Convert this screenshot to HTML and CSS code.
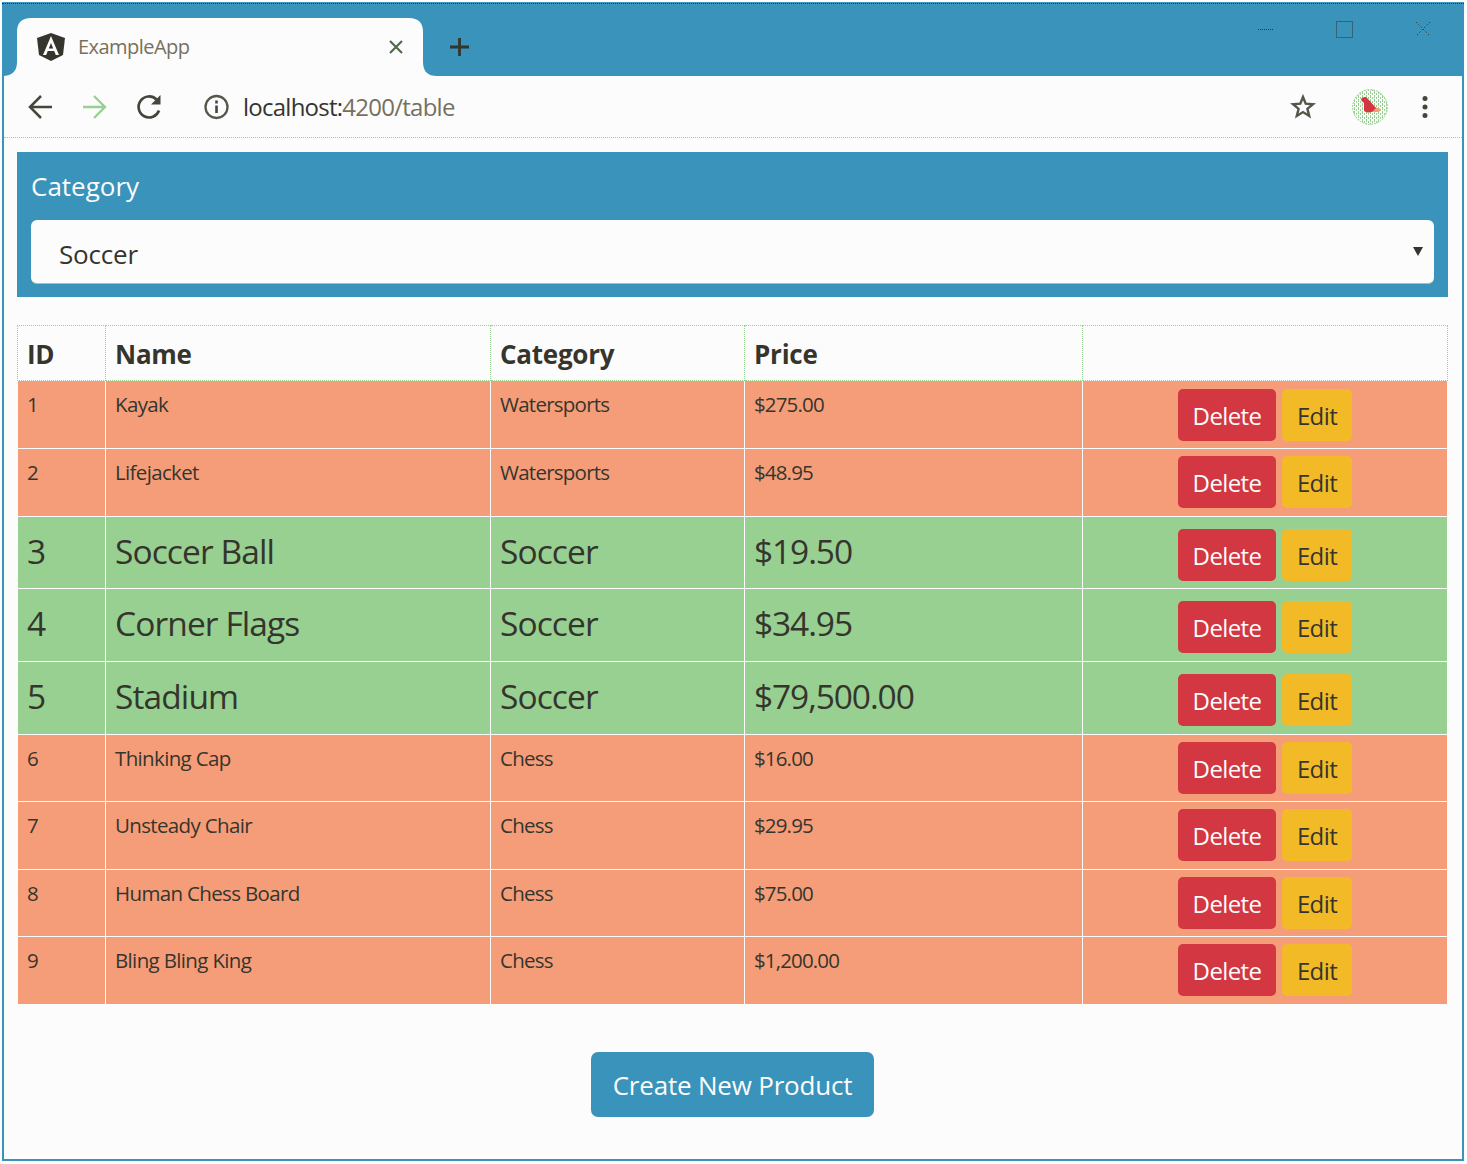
FILE: index.html
```html
<!DOCTYPE html>
<html lang="en">
<head>
<meta charset="utf-8">
<title>ExampleApp</title>
<link rel="stylesheet" href="styles.css">
</head>
<body>
<div class="window">
  <header class="tabbar">
    <svg class="tab-shape" width="434" height="58" viewBox="0 0 434 58"><path d="M0 58Q13 57 13 44V14Q13 0 27 0H405Q419 0 419 14V44Q419 58 433 58Z" fill="#fcfcfc"/></svg>
    <div class="tab">
      <svg class="logo" width="28" height="28" viewBox="0 0 28 28"><path d="M14 0L28 5L26 22L14 28L2 22L0 5Z" fill="#35352d"/><path fill-rule="evenodd" d="M14 3L22 22H18.8L17.2 18H10.8L9.2 22H6ZM14 10L11.8 15.4H16.2Z" fill="#fcfcfc"/></svg>
      <span class="tab-title">ExampleApp</span>
      <svg class="tab-close" width="16" height="16" viewBox="0 0 16 16"><path d="M2 2L14 14M14 2L2 14" stroke="#55684a" stroke-width="2.2"/></svg>
    </div>
    <svg class="tab-new" width="22" height="20" viewBox="0 0 22 20"><path d="M1 10H20M10.500 1V19" stroke="#35352d" stroke-width="2.8"/></svg>
    <div class="controls">
      <svg width="16" height="16" viewBox="0 0 16 16"><path d="M0 8.500H15" stroke="#35352d" stroke-dasharray="1 1"/></svg>
      <svg width="17" height="17" viewBox="0 0 17 17"><path d="M.5 .5H16.500V16.500H.5Z" fill="none" stroke="#35352d" stroke-dasharray="1 1"/></svg>
      <svg width="16" height="16" viewBox="0 0 16 16"><path d="M1 1L15 15M15 1L1 15" stroke="#35352d" stroke-width=".9" stroke-dasharray="1.400 2"/></svg>
    </div>
  </header>
  <nav class="toolbar">
    <svg class="back" width="26" height="26" viewBox="0 0 26 26"><path d="M25 13H3M14 2L3 13L14 24" fill="none" stroke="#45453b" stroke-width="2.500"/></svg>
    <svg class="forward" width="26" height="26" viewBox="0 0 26 26"><path d="M1 13H23M12 2L23 13L12 24" fill="none" stroke="#98d092" stroke-width="2.300"/></svg>
    <svg class="reload" width="26" height="26" viewBox="0 0 26 26"><path d="M23 16.500A10.500 10.500 0 1 1 20.500 5.500" fill="none" stroke="#45453b" stroke-width="2.700"/><path d="M24.500 1V10.500H15Z" fill="#45453b"/></svg>
    <svg class="info" width="26" height="26" viewBox="0 0 26 26"><circle cx="12.500" cy="13" r="11" fill="none" stroke="#56564a" stroke-width="2.300"/><path d="M12.500 11.500V19M12.500 6.500V9.500" stroke="#45453b" stroke-width="2.600"/></svg>
    <span class="url"><b>localhost:</b>4200/table</span>
    <svg class="star" width="26" height="26" viewBox="0 0 26 26"><path d="M13 3L15.700 9.700L23 10.200L17.400 14.900L19.200 22L13 18.100L6.800 22L8.600 14.900L3 10.200L10.300 9.700Z" fill="none" stroke="#56564a" stroke-width="2.400"/></svg>
    <svg class="avatar" width="36" height="36" viewBox="0 0 36 36"><defs><pattern id="weave" width="4" height="4" patternUnits="userSpaceOnUse"><path d="M0 0h1v2h-1zM2 2h1v2h-1z" fill="#98d092"/><path d="M2 0h1v1h-1z" fill="#98d092"/></pattern></defs><circle cx="18" cy="18" r="17.500" fill="url(#weave)"/><circle cx="18" cy="18" r="17.300" fill="none" stroke="#98d092" stroke-dasharray="2 1"/><path d="M19 17L29 20L27 23L19 23Z" fill="#f59d79"/><path d="M9 11Q9 8 14 8L17 11L24 19L21 22Q17 25 12 22L12 14Z" fill="#d23742"/></svg>
    <svg class="menu" width="8" height="26" viewBox="0 0 8 26"><g fill="#45453b"><circle cx="4" cy="4.500" r="2.500"/><circle cx="4" cy="13" r="2.500"/><circle cx="4" cy="21.500" r="2.500"/></g></svg>
  </nav>
  <main>
    <section class="filter">
      <label>Category</label>
      <div class="select"><span>Soccer</span><svg width="10" height="9" viewBox="0 0 10 9"><path d="M0 0H10L5 9Z" fill="#35352d"/></svg></div>
    </section>
    <table>
      <colgroup><col class="c-id"><col class="c-name"><col class="c-cat"><col class="c-price"><col></colgroup>
      <thead><tr><th>ID</th><th>Name</th><th>Category</th><th>Price</th><th></th></tr></thead>
      <tbody>
        <tr class="other tall first"><td>1</td><td>Kayak</td><td>Watersports</td><td>$275.00</td><td class="actions"><button class="delete">Delete</button><button class="edit">Edit</button></td></tr>
        <tr class="other tall"><td>2</td><td>Lifejacket</td><td>Watersports</td><td>$48.95</td><td class="actions"><button class="delete">Delete</button><button class="edit">Edit</button></td></tr>
        <tr class="match first"><td>3</td><td>Soccer Ball</td><td>Soccer</td><td>$19.50</td><td class="actions"><button class="delete">Delete</button><button class="edit">Edit</button></td></tr>
        <tr class="match"><td>4</td><td>Corner Flags</td><td>Soccer</td><td>$34.95</td><td class="actions"><button class="delete">Delete</button><button class="edit">Edit</button></td></tr>
        <tr class="match"><td>5</td><td>Stadium</td><td>Soccer</td><td>$79,500.00</td><td class="actions"><button class="delete">Delete</button><button class="edit">Edit</button></td></tr>
        <tr class="other"><td>6</td><td>Thinking Cap</td><td>Chess</td><td>$16.00</td><td class="actions"><button class="delete">Delete</button><button class="edit">Edit</button></td></tr>
        <tr class="other tall"><td>7</td><td>Unsteady Chair</td><td>Chess</td><td>$29.95</td><td class="actions"><button class="delete">Delete</button><button class="edit">Edit</button></td></tr>
        <tr class="other"><td>8</td><td>Human Chess Board</td><td>Chess</td><td>$75.00</td><td class="actions"><button class="delete">Delete</button><button class="edit">Edit</button></td></tr>
        <tr class="other last"><td>9</td><td>Bling Bling King</td><td>Chess</td><td>$1,200.00</td><td class="actions"><button class="delete">Delete</button><button class="edit">Edit</button></td></tr>
      </tbody>
    </table>
    <button class="create">Create New Product</button>
  </main>
</div>
</body>
</html>
```
FILE: styles.css
```css
* { box-sizing: border-box; }
body { margin: 0; padding: 2px; background: #fcfcfc; color: #35352d; font-family: "Open Sans", "Noto Sans", sans-serif; }
svg { display: block; flex: none; }
button { font-family: inherit; border: 0; padding: 0; }
.window { width: 1462px; height: 1159px; border: 2px solid #3993ba; border-top: 0; background: #fcfcfc; }
.tabbar { height: 74px; margin: 0 -2px; background: #3993ba; display: flex; position: relative; }
.tabbar::before { content: ""; position: absolute; top: 1px; left: 0; right: 0; border-top: 1px dotted #35352d; }
.tab-shape { position: absolute; left: 2px; bottom: 0; }
.tab { position: relative; width: 420px; padding: 31px 18px 0 35px; display: flex; align-items: flex-start; }
.tab-title { font-size: 20px; line-height: 28px; margin: 0 0 0 13px; letter-spacing: -.55px; color: #77705c; }
.tab-close { margin: 6px 0 0 auto; }
.tab-new { margin: 35px 0 0 27px; }
.controls { margin-left: auto; padding: 19px 33px 0 0; display: flex; gap: 62px; }
.toolbar { height: 62px; padding-left: 23px; display: flex; align-items: center; border-bottom: 1px dotted #98d092; }
.forward { margin-left: 29px; }
.reload { margin-left: 28px; }
.info { margin-left: 42px; }
.url { margin-left: 13px; font-size: 24px; line-height: 32px; letter-spacing: -.75px; color: #77705c; }
.url b { font-weight: 400; color: #35352d; }
.star { margin-left: auto; }
.avatar { margin-left: 36px; }
.menu { margin: 0 33px 0 33px; }
main { padding: 14px 14px 0 13px; display: flex; flex-direction: column; }
.filter { height: 145px; background: #3993ba; padding: 15px 14px 0; }
.filter label { display: block; height: 53px; font-size: 26px; line-height: 38px; color: #fcfcfc; }
.select { height: 64px; background: #fcfcfc; border-radius: 6px; border-bottom: 1px solid #98d092; padding: 4px 11px 0 28px; display: flex; justify-content: space-between; align-items: center; font-size: 26px; letter-spacing: -.2px; }
.select svg { margin-top: -5px; }
table { width: 1431px; margin-top: 28px; table-layout: fixed; border-collapse: separate; border-spacing: 0; }
.c-id { width: 89px; }
.c-name { width: 385px; }
.c-cat { width: 254px; }
.c-price { width: 338px; }
th { height: 56px; padding: 1px 9px 0; text-align: left; font-size: 26px; line-height: 36px; letter-spacing: -.25px; border: 1px dotted #98d092; border-left: 0; }
th:first-child { border-left: 1px dotted #98d092; }
td { height: 67px; padding: 0 9px; vertical-align: top; border-right: 1px solid #fcfcfc; border-bottom: 1px solid #fcfcfc; }
td:first-child { border-left: 1px solid #fcfcfc; }
.tall td { height: 68px; }
.match td { height: 73px; }
.match.first td { height: 72px; }
.last td { border-bottom: 0; }
.other td { background: #f59d79; font-size: 20.5px; line-height: 30px; letter-spacing: -.75px; padding-top: 8px; }
.other td:nth-child(2) { letter-spacing: -.65px; }
.other td:nth-child(4) { letter-spacing: -.85px; }
.match td { background: #98d092; font-size: 33.5px; line-height: 46px; letter-spacing: -.9px; padding-top: 11px; }
.match td:nth-child(4) { letter-spacing: -1.1px; }
.other td.actions { padding-top: 7px; }
.other.first td.actions { padding-top: 8px; }
.match td.actions { padding-top: 12px; }
td.actions { font-size: 0; text-align: center; padding-right: 10px; }
.actions button { height: 52px; padding: 1px 0 0 1px; font-size: 24px; line-height: 51px; letter-spacing: -.6px; border-radius: 5px; vertical-align: top; }
.delete { width: 98px; background: #d23742; color: #fcfcfc; }
.edit { width: 70px; margin-left: 6px; background: #f3ba28; color: #35352d; }
.create { align-self: center; width: 283px; height: 65px; margin-top: 48px; background: #3993ba; border-radius: 7px; color: #fcfcfc; font-size: 26px; letter-spacing: -.2px; }
```
